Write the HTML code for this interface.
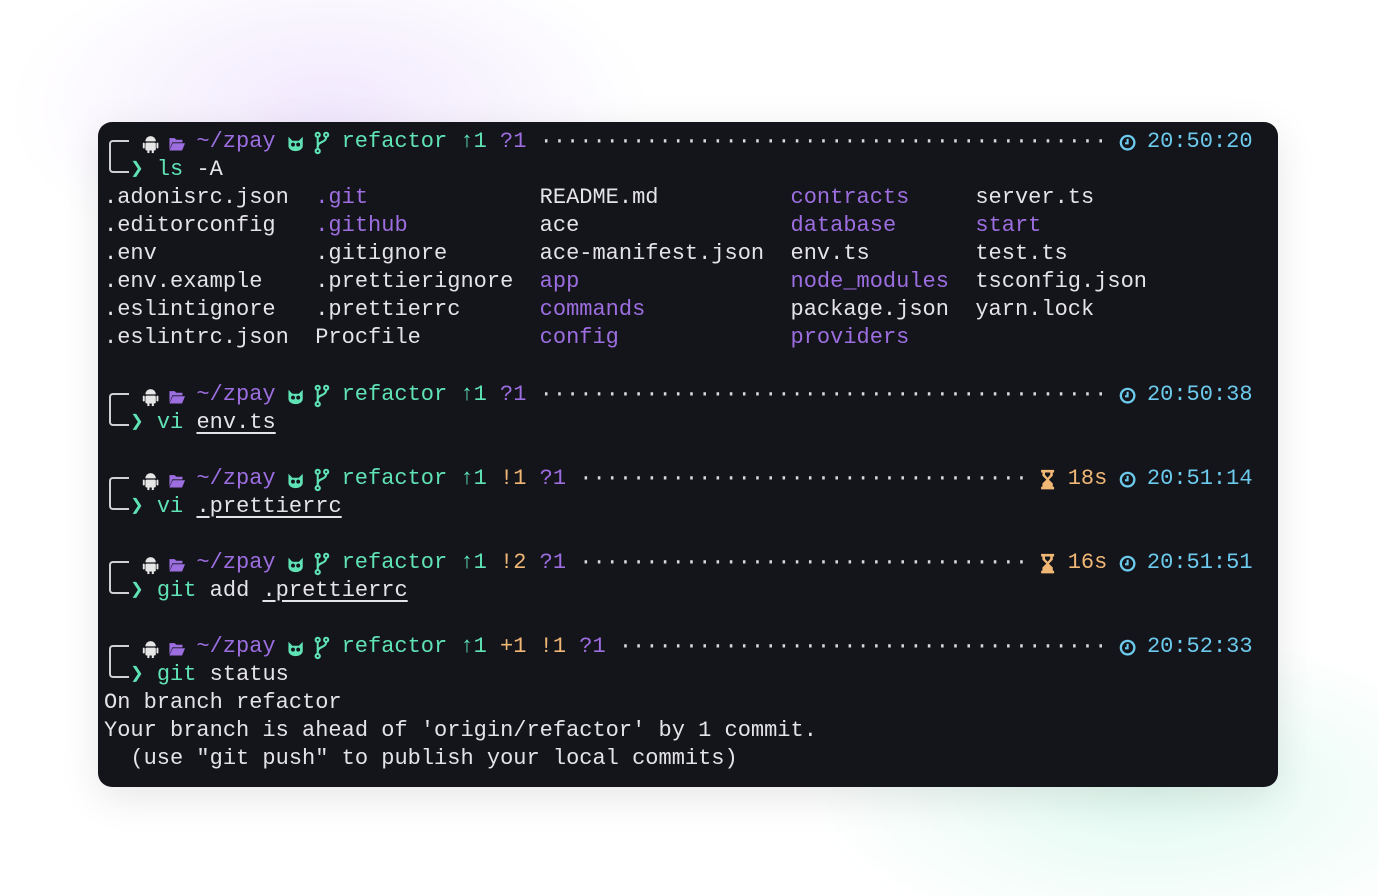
<!DOCTYPE html>
<html><head><meta charset="utf-8"><style>
html,body{margin:0;padding:0}
body{width:1378px;height:896px;position:relative;overflow:hidden;background:#fff;
background:radial-gradient(ellipse 320px 170px at 330px 110px,rgba(215,190,250,.35),rgba(255,255,255,0) 100%),radial-gradient(ellipse 340px 160px at 1150px 790px,rgba(170,240,215,.35),rgba(255,255,255,0) 100%),#fff;}
.term{position:absolute;left:98px;top:122px;width:1180px;height:665px;background:#14141b;border-radius:14px;box-shadow:0 10px 40px rgba(0,0,0,.10);overflow:hidden}
.l{position:absolute;left:6px;margin:0;white-space:pre;font:22px/28px "Liberation Mono","DejaVu Sans Mono",monospace;color:#e4e4e8}
.g{color:#5fe3b5}.p{color:#9c6ee0}.c{color:#6ccaec}.o{color:#f0b775}.w{color:#e4e4e8}.d{color:#d8d8dc}
.u{text-decoration:underline;text-underline-offset:4px}
.i{display:inline-block;width:13.2px;height:28px;vertical-align:top;overflow:visible;transform:scale(1.3)}
.br{position:absolute;left:11px;width:18px;height:29px;border:2px solid #d0d0d4;border-right:none;border-radius:4px 0 0 4px}
</style></head><body>
<div class="term">
<svg width="0" height="0" style="position:absolute"><defs>
<symbol id="and" viewBox="0 0 13 28"><path d="M2.5 13.5a4 4 0 0 1 8 0z" fill="#e6e6e6"/><rect x="2.5" y="14.5" width="8" height="6" rx="1" fill="#e6e6e6"/><rect x="0.5" y="14.5" width="1.5" height="4.5" rx=".7" fill="#e6e6e6"/><rect x="11" y="14.5" width="1.5" height="4.5" rx=".7" fill="#e6e6e6"/><rect x="4" y="20" width="1.6" height="2.5" fill="#e6e6e6"/><rect x="7.4" y="20" width="1.6" height="2.5" fill="#e6e6e6"/></symbol>
<symbol id="fol" viewBox="0 0 13 28"><path d="M1 11h4l1.2 1.3H11v2H3.2L1 20z" fill="#9c6ee0"/><path d="M3.5 15h9.5l-2.3 5.5H1z" fill="#9c6ee0"/></symbol>
<symbol id="cat" viewBox="0 0 13 28"><path d="M1 10l3 3h5l3-3v7a5.5 4 0 0 1-11 0z" fill="#5fe3b5"/><circle cx="4.5" cy="16" r="1.5" fill="#14141b"/><circle cx="8.5" cy="16" r="1.5" fill="#14141b"/></symbol>
<symbol id="bra" viewBox="0 0 13 28"><g fill="none" stroke="#5fe3b5" stroke-width="1.6"><circle cx="3.5" cy="8.5" r="1.6"/><circle cx="10" cy="8.5" r="1.6"/><circle cx="3.5" cy="21" r="1.6"/><path d="M3.5 10v9.4M10 10c0 5-6.5 3-6.5 8"/></g></symbol>
<symbol id="clk" viewBox="0 0 13 28"><circle cx="6.5" cy="14.5" r="5.2" fill="none" stroke="#6ccaec" stroke-width="1.8"/><path d="M6.5 11.5v3.5h-2" fill="none" stroke="#6ccaec" stroke-width="1.6"/></symbol>
<symbol id="hg" viewBox="0 0 13 28"><path d="M1.5 7h10v2h-1v2.5L7.5 14.5l3 3V20h1v2h-10v-2h1v-2.5l3-3-3-3V9h-1z" fill="#f0b775"/><path d="M4.5 9h4v1.8L6.5 13 4.5 10.8z" fill="#14141b"/></symbol>
</defs></svg>

<div class="br" style="top:18px"></div>
<pre class="l" style="top:6px">   <svg class="i"><use href="#and" width="13.2" height="28"/></svg> <svg class="i"><use href="#fol" width="13.2" height="28"/></svg> <span class="p">~/zpay</span> <svg class="i"><use href="#cat" width="13.2" height="28"/></svg> <svg class="i"><use href="#bra" width="13.2" height="28"/></svg> <span class="g">refactor ↑1</span> <span class="p">?1</span> <span class="d">···········································</span> <svg class="i"><use href="#clk" width="13.2" height="28"/></svg> <span class="c">20:50:20</span></pre>
<pre class="l" style="top:34px">  <span class="g">❯ ls</span> -A</pre>
<pre class="l" style="top:62px">.adonisrc.json  <span class="p">.git</span>             README.md          <span class="p">contracts</span>     server.ts
.editorconfig   <span class="p">.github</span>          ace                <span class="p">database</span>      <span class="p">start</span>
.env            .gitignore       ace-manifest.json  env.ts        test.ts
.env.example    .prettierignore  <span class="p">app</span>                <span class="p">node_modules</span>  tsconfig.json
.eslintignore   .prettierrc      <span class="p">commands</span>           package.json  yarn.lock
.eslintrc.json  Procfile         <span class="p">config</span>             <span class="p">providers</span></pre>

<div class="br" style="top:271px"></div>
<pre class="l" style="top:259px">   <svg class="i"><use href="#and" width="13.2" height="28"/></svg> <svg class="i"><use href="#fol" width="13.2" height="28"/></svg> <span class="p">~/zpay</span> <svg class="i"><use href="#cat" width="13.2" height="28"/></svg> <svg class="i"><use href="#bra" width="13.2" height="28"/></svg> <span class="g">refactor ↑1</span> <span class="p">?1</span> <span class="d">···········································</span> <svg class="i"><use href="#clk" width="13.2" height="28"/></svg> <span class="c">20:50:38</span></pre>
<pre class="l" style="top:287px">  <span class="g">❯ vi</span> <span class="u">env.ts</span></pre>

<div class="br" style="top:355px"></div>
<pre class="l" style="top:343px">   <svg class="i"><use href="#and" width="13.2" height="28"/></svg> <svg class="i"><use href="#fol" width="13.2" height="28"/></svg> <span class="p">~/zpay</span> <svg class="i"><use href="#cat" width="13.2" height="28"/></svg> <svg class="i"><use href="#bra" width="13.2" height="28"/></svg> <span class="g">refactor ↑1</span> <span class="o">!1</span> <span class="p">?1</span> <span class="d">··································</span> <svg class="i"><use href="#hg" width="13.2" height="28"/></svg> <span class="o">18s</span> <svg class="i"><use href="#clk" width="13.2" height="28"/></svg> <span class="c">20:51:14</span></pre>
<pre class="l" style="top:371px">  <span class="g">❯ vi</span> <span class="u">.prettierrc</span></pre>

<div class="br" style="top:439px"></div>
<pre class="l" style="top:427px">   <svg class="i"><use href="#and" width="13.2" height="28"/></svg> <svg class="i"><use href="#fol" width="13.2" height="28"/></svg> <span class="p">~/zpay</span> <svg class="i"><use href="#cat" width="13.2" height="28"/></svg> <svg class="i"><use href="#bra" width="13.2" height="28"/></svg> <span class="g">refactor ↑1</span> <span class="o">!2</span> <span class="p">?1</span> <span class="d">··································</span> <svg class="i"><use href="#hg" width="13.2" height="28"/></svg> <span class="o">16s</span> <svg class="i"><use href="#clk" width="13.2" height="28"/></svg> <span class="c">20:51:51</span></pre>
<pre class="l" style="top:455px">  <span class="g">❯ git</span> add <span class="u">.prettierrc</span></pre>

<div class="br" style="top:523px"></div>
<pre class="l" style="top:511px">   <svg class="i"><use href="#and" width="13.2" height="28"/></svg> <svg class="i"><use href="#fol" width="13.2" height="28"/></svg> <span class="p">~/zpay</span> <svg class="i"><use href="#cat" width="13.2" height="28"/></svg> <svg class="i"><use href="#bra" width="13.2" height="28"/></svg> <span class="g">refactor ↑1</span> <span class="o">+1 !1</span> <span class="p">?1</span> <span class="d">·····································</span> <svg class="i"><use href="#clk" width="13.2" height="28"/></svg> <span class="c">20:52:33</span></pre>
<pre class="l" style="top:539px">  <span class="g">❯ git</span> status
On branch refactor
Your branch is ahead of 'origin/refactor' by 1 commit.
  (use "git push" to publish your local commits)</pre>
</div>
</body></html>
